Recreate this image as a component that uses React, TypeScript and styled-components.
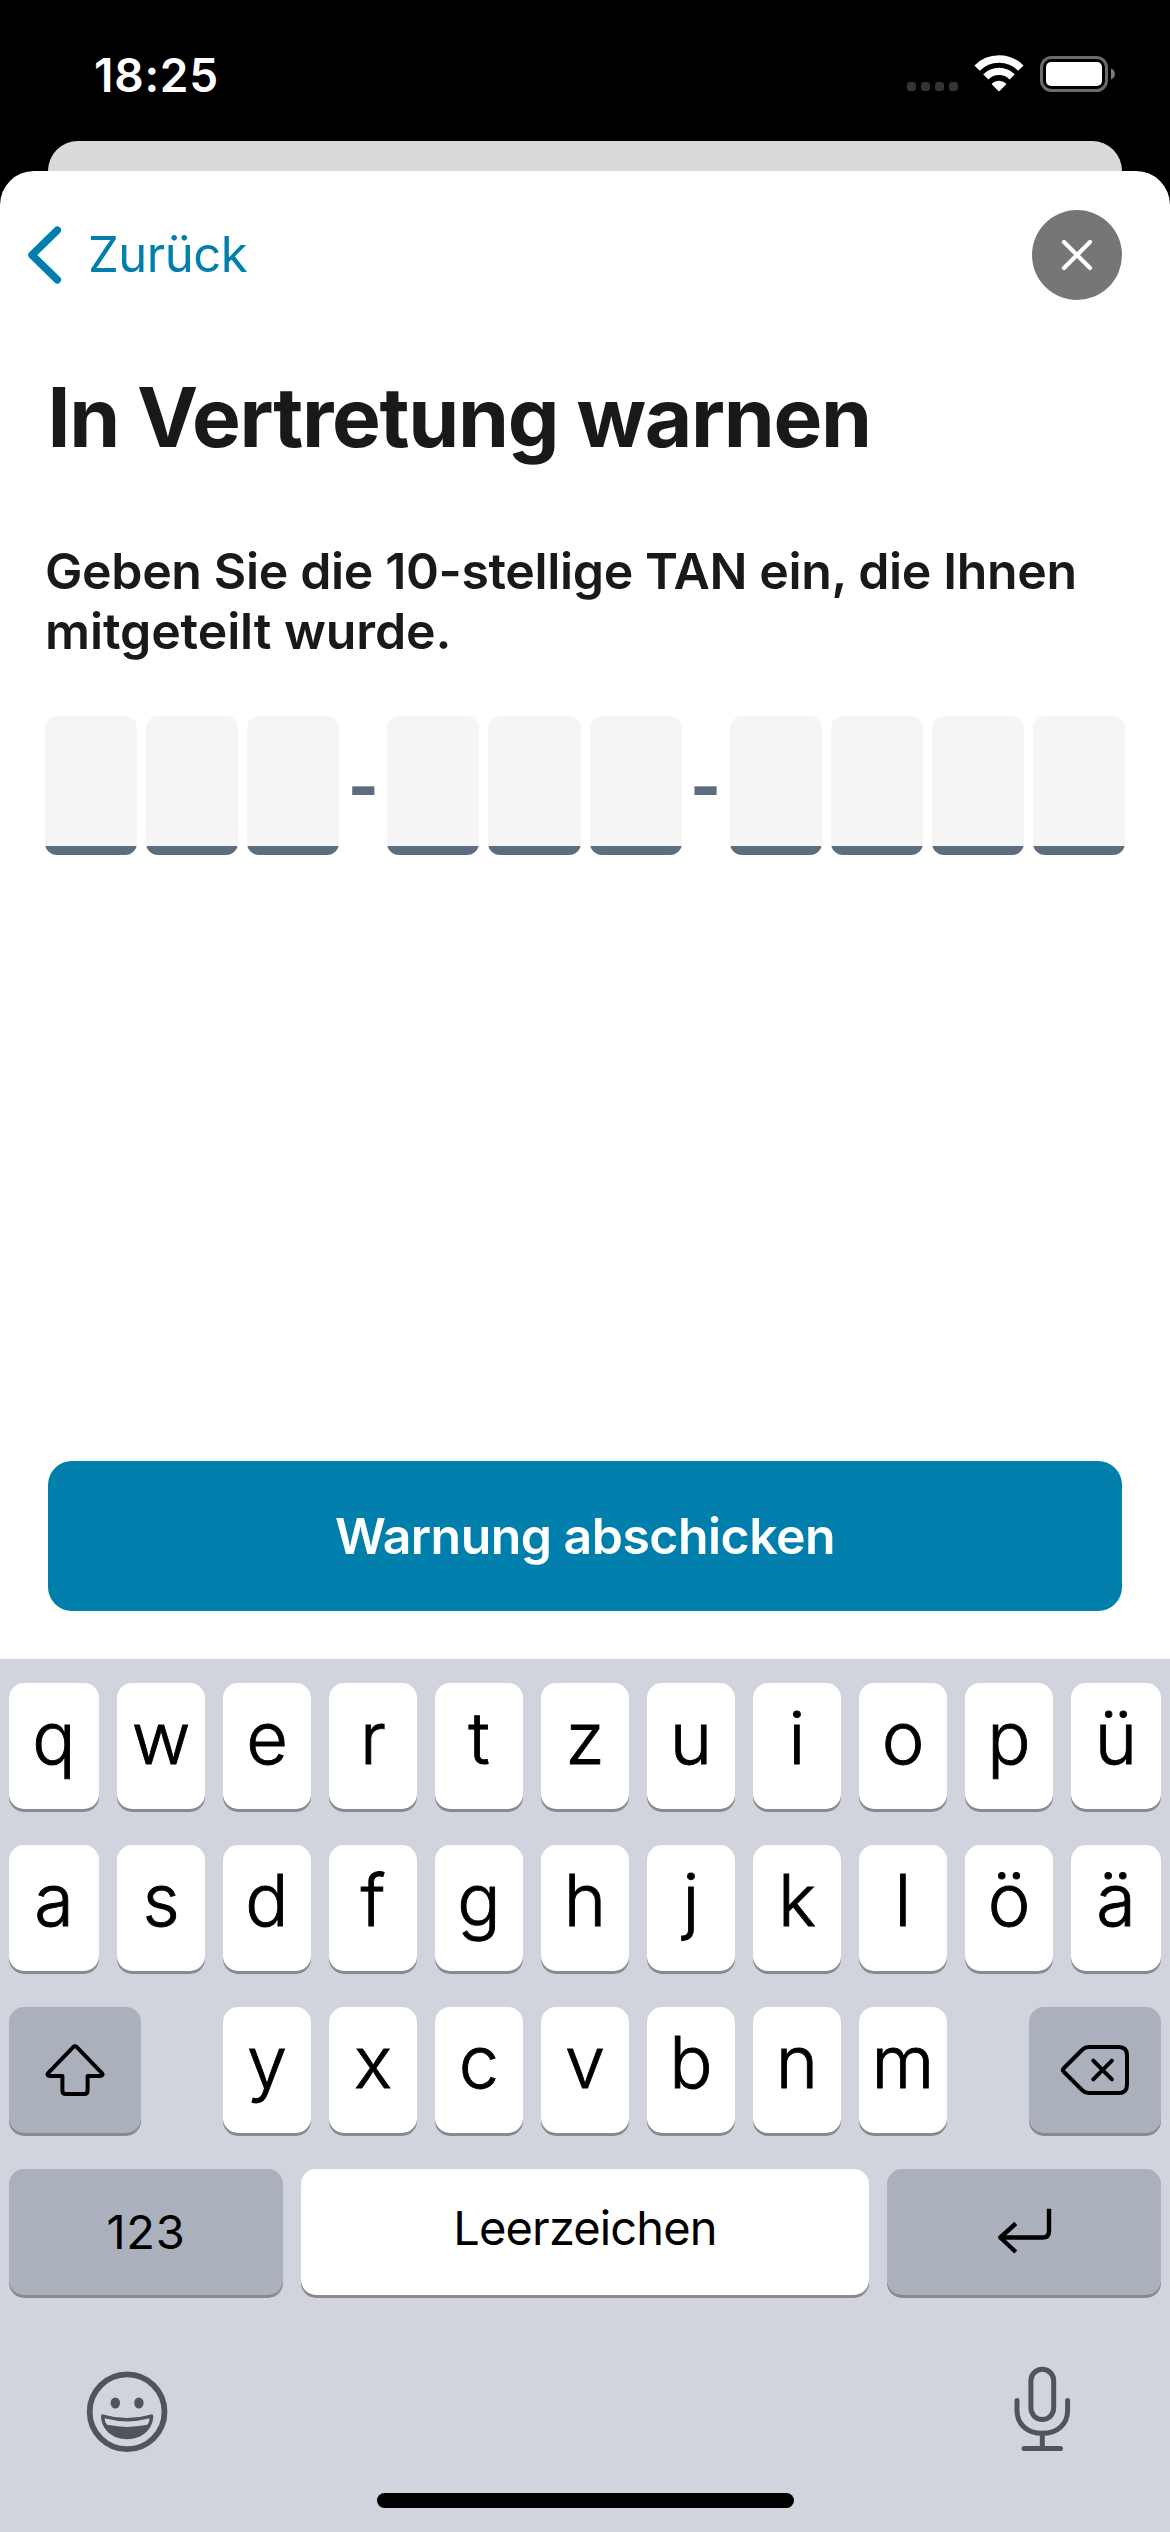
import React from "react";
import styled, { createGlobalStyle } from "styled-components";

const accent = "#007fad";
const slate = "#5c6d80";
const glyphGrey = "#50545c";

const GlobalStyle = createGlobalStyle`
  *, *::before, *::after { box-sizing: border-box; }
  body { margin: 0; background: #000; }
  button { border: 0; padding: 0; margin: 0; background: none; font: inherit; color: inherit; }
  svg { display: block; flex: none; }
`;

const Screen = styled.div`
  width: 1170px;
  height: 2532px;
  display: flex;
  flex-direction: column;
  overflow: hidden;
  background: #000;
  font-family: Inter, "Liberation Sans", sans-serif;
`;

const StatusBar = styled.header`
  flex: none;
  height: 141px;
  padding: 8px 54px 0 94px;
  display: flex;
  align-items: center;
  justify-content: space-between;
  color: #fff;
`;

const Clock = styled.span`
  font-size: 46px;
  font-weight: 600;
  line-height: 60px;
  letter-spacing: 0.75px;
`;

const Indicators = styled.div`
  display: flex;
  align-items: flex-start;
  gap: 16px;
  height: 39px;
`;

const SignalDots = styled.div`
  display: flex;
  gap: 5px;
  padding-top: 27px;
`;

const SignalDot = styled.i`
  width: 9px;
  height: 9px;
  border-radius: 3px;
  background: #333433;
`;

const UnderlyingSheet = styled.div`
  flex: none;
  height: 30px;
  margin: 0 48px;
  border-radius: 30px 30px 0 0;
  background: #dadada;
`;

const Sheet = styled.main`
  flex: none;
  height: 1488px;
  padding-bottom: 48px;
  display: flex;
  flex-direction: column;
  border-radius: 34px 34px 0 0;
  background: #fff;
  color: #18191b;
`;

const NavBar = styled.nav`
  height: 168px;
  padding: 0 48px 0 24px;
  display: flex;
  align-items: center;
  justify-content: space-between;
`;

const BackButton = styled.button`
  display: flex;
  align-items: center;
  gap: 23px;
  color: ${accent};
  font-size: 49px;
  line-height: 60px;
  letter-spacing: -0.5px;
`;

const CloseButton = styled.button`
  width: 90px;
  height: 90px;
  display: flex;
  align-items: center;
  justify-content: center;
  border-radius: 50%;
  background: #757678;
`;

const Title = styled.h1`
  margin: 28px 0 0 47.5px;
  font-size: 82px;
  font-weight: 700;
  line-height: 101px;
  letter-spacing: -1.3px;
`;

const Instruction = styled.p`
  margin: 73px 45px 0;
  font-size: 50px;
  font-weight: 600;
  line-height: 60px;
`;

const InstructionLine = styled.span<{ $tracking: string }>`
  display: block;
  white-space: nowrap;
  letter-spacing: ${(p) => p.$tracking};
`;

const TanInput = styled.div`
  height: 139px;
  margin: 55px 45px 0;
  display: flex;
`;

const TanGroup = styled.div<{ $count: number }>`
  flex: none;
  display: grid;
  grid-template-columns: repeat(${(p) => p.$count}, 92.1px);
  gap: 9px;
`;

const TanDigit = styled.div`
  border-radius: 12px;
  background: linear-gradient(to bottom, #f5f5f5 130px, ${slate} 130px);
`;

const TanSeparator = styled.span`
  flex: 1;
  padding-top: 30px;
  text-align: center;
  color: ${slate};
  font-size: 66px;
  font-weight: 800;
  line-height: 80px;
`;

const SubmitButton = styled.button`
  height: 150px;
  margin: auto 48px 0;
  border-radius: 24px;
  background: ${accent};
  color: #fff;
  font-size: 50px;
  font-weight: 600;
  line-height: 60px;
  letter-spacing: -0.54px;
`;

const Keyboard = styled.section`
  flex: 1;
  padding: 24px 9px;
  display: flex;
  flex-direction: column;
  background: #d1d4dc;
  color: #000;
`;

const KeyRows = styled.div`
  display: flex;
  flex-direction: column;
  gap: 36px;
`;

const KeyRow = styled.div<{ $columns: string }>`
  display: grid;
  grid-template-columns: ${(p) => p.$columns};
  justify-content: space-between;
  column-gap: 18px;
`;

const KeyCluster = styled.div`
  display: grid;
  grid-template-columns: repeat(7, 88px);
  column-gap: 18px;
`;

const Key = styled.button<{ $muted?: boolean }>`
  height: 126px;
  display: flex;
  align-items: center;
  justify-content: center;
  border-radius: 15px;
  background: ${(p) => (p.$muted ? "#aab0bc" : "#fff")};
  box-shadow: 0 3px 0 #898a8d;
`;

const LetterKey = styled(Key)`
  padding-bottom: 16px;
  font-size: 72px;
  font-weight: 300;
  line-height: 90px;
  -webkit-text-stroke: 0.9px #000;
`;

const LabelKey = styled(Key)<{ $tracking: string; $lift?: string }>`
  padding-bottom: ${(p) => p.$lift ?? "0"};
  font-size: 47px;
  line-height: 60px;
  letter-spacing: ${(p) => p.$tracking};
`;

const KeyboardFooter = styled.div`
  height: 198px;
  padding: 70px 89.5px 0 76px;
  display: flex;
  align-items: flex-start;
  justify-content: space-between;
`;

const EmojiButton = styled.button`
  padding-top: 5px;
`;

const HomeIndicator = styled.div`
  width: 417px;
  height: 15px;
  margin: 0 auto;
  border-radius: 8px;
  background: #000;
`;

const WifiIcon = () => (
  <svg width="50" height="37" viewBox="974 55 50 37" fill="none" stroke="#fff">
    <path d="M977.1 68.1a31 31 0 0 1 43.8 0" strokeWidth="7.6" />
    <path d="M985.8 76.8a18.7 18.7 0 0 1 26.4 0" strokeWidth="7.4" />
    <path d="M992 83.6a10.2 10.2 0 0 1 14 0q.5.5 0 1l-6.4 6.3q-.6.6-1.2 0L992 84.6q-.5-.5 0-1z" fill="#fff" stroke="none" />
  </svg>
);

const BatteryIcon = () => (
  <svg width="76" height="38" viewBox="1040 55 76 38">
    <rect x="1041.5" y="57.5" width="65" height="33" rx="10" fill="none" stroke="#6b6b6b" strokeWidth="3" />
    <rect x="1046" y="62" width="56" height="24" rx="5" fill="#fff" />
    <path d="M1111 68.5c5.2 2 5.2 9 0 11z" fill="#7a7a7a" />
  </svg>
);

const ChevronIcon = () => (
  <svg width="41" height="62" viewBox="24 224 41 62" fill="none" stroke={accent} strokeWidth="7.5" strokeLinecap="round" strokeLinejoin="round">
    <path d="M57.3 230.2 32 255l25.3 24.8" />
  </svg>
);

const CloseIcon = () => (
  <svg width="34" height="34" viewBox="0 0 34 34" stroke="#fff" strokeWidth="4.2" strokeLinecap="round">
    <path d="M4 4l26 26M30 4 4 30" />
  </svg>
);

const ShiftIcon = () => (
  <svg width="64" height="56" viewBox="43.5 2042 64 56" fill="none" stroke="#000" strokeWidth="4" strokeLinejoin="round">
    <path d="M73.9 2046.9q1.6-1.6 3.2 0l25.3 26.2q1 1 .5 1.9-.4.9-1.7.9H88.1v14.6q0 3.5-3.5 3.500H66.400q-3.500 0-3.500-3.500v-14.600H49.800q-1.300 0-1.700-.9-.5-.9.5-1.900z" />
  </svg>
);

const DeleteIcon = () => (
  <svg width="70" height="52" viewBox="1059 2044 70 52" fill="none" stroke="#000" strokeWidth="4" strokeLinecap="round" strokeLinejoin="round">
    <path d="M1062.5 2068.5 1081.5 2049.5q2.6-2.5 6.2-2.5h30q8.3 0 8.3 8.3v29.4q0 8.3-8.3 8.3h-30q-3.6 0-6.2-2.5L1062.5 2071.5q-1.4-1.5 0-3z" />
    <path d="M1092.300 2060.700l18.600 18.600M1110.900 2060.700l-18.600 18.600" />
  </svg>
);

const ReturnIcon = () => (
  <svg width="56" height="48" viewBox="995.5 2207.5 56 48" fill="none" stroke="#000" strokeWidth="4.4">
    <path d="M1048.5 2208.2v22.3q0 6.5-6.5 6.500H999" />
    <path d="M1015.300 2223 999.800 2237l15.500 14.500" strokeLinejoin="round" />
  </svg>
);

const EmojiIcon = () => (
  <svg width="84" height="84" viewBox="85 2370 84 84">
    <circle cx="127.1" cy="2411.8" r="37.4" fill="none" stroke={glyphGrey} strokeWidth="5.8" />
    <ellipse cx="115.3" cy="2403" rx="4.7" ry="5.5" fill={glyphGrey} />
    <ellipse cx="138.9" cy="2403" rx="4.7" ry="5.5" fill={glyphGrey} />
    <path
      fill={glyphGrey}
      fillRule="evenodd"
      d="M103.2 2414.4Q127 2421.6 150.9 2414.4 153.3 2414 153.3 2416.5C152.7 2430 141.5 2439.2 127.1 2439.2S101.6 2430 101 2416.5Q101 2414 103.2 2414.4ZM105.6 2418.6Q104.5 2418.3 104.7 2419.4 105.2 2422.3 106.6 2424.2 107.2 2424.9 108.3 2425.1 127 2428.7 146 2425.1 147.3 2424.9 147.9 2424 149.1 2422 149.5 2419.4 149.6 2418.3 148.6 2418.6 127 2424.2 105.6 2418.6Z"
    />
  </svg>
);

const MicIcon = () => (
  <svg width="60" height="88" viewBox="1011.5 2365 60 88" fill="none" stroke={glyphGrey} strokeWidth="5" strokeLinecap="round">
    <rect x="1030.4" y="2369.3" width="22.8" height="50.2" rx="11.4" />
    <path d="M1016.5 2400.5v9.5c0 14.5 10.3 23.3 25.3 23.3s25.3-8.8 25.3-23.3v-9.5M1041.8 2433.3v15M1023.500 2448.500h36.500" />
  </svg>
);

const fullRow = "90px repeat(9, 88px) 90px";

const Letters = ({ keys }: { keys: string }) => (
  <>
    {[...keys].map((letter) => (
      <LetterKey key={letter}>{letter}</LetterKey>
    ))}
  </>
);

const Digits = ({ count }: { count: number }) => (
  <TanGroup $count={count}>
    {Array.from({ length: count }, (_, i) => (
      <TanDigit key={i} />
    ))}
  </TanGroup>
);

export default function App() {
  return (
    <Screen>
      <GlobalStyle />
      <StatusBar>
        <Clock>18:25</Clock>
        <Indicators>
          <SignalDots>
            <SignalDot />
            <SignalDot />
            <SignalDot />
            <SignalDot />
          </SignalDots>
          <WifiIcon />
          <BatteryIcon />
        </Indicators>
      </StatusBar>
      <UnderlyingSheet />
      <Sheet>
        <NavBar>
          <BackButton>
            <ChevronIcon />
            Zurück
          </BackButton>
          <CloseButton aria-label="Schließen">
            <CloseIcon />
          </CloseButton>
        </NavBar>
        <Title>In Vertretung warnen</Title>
        <Instruction>
          <InstructionLine $tracking="-0.36px">Geben Sie die 10-stellige TAN ein, die Ihnen</InstructionLine>
          <InstructionLine $tracking="-0.1px">mitgeteilt wurde.</InstructionLine>
        </Instruction>
        <TanInput>
          <Digits count={3} />
          <TanSeparator>-</TanSeparator>
          <Digits count={3} />
          <TanSeparator>-</TanSeparator>
          <Digits count={4} />
        </TanInput>
        <SubmitButton>Warnung abschicken</SubmitButton>
      </Sheet>
      <Keyboard>
        <KeyRows>
          <KeyRow $columns={fullRow}>
            <Letters keys="qwertzuiopü" />
          </KeyRow>
          <KeyRow $columns={fullRow}>
            <Letters keys="asdfghjklöä" />
          </KeyRow>
          <KeyRow $columns="132px auto 132px">
            <Key $muted aria-label="Umschalt">
              <ShiftIcon />
            </Key>
            <KeyCluster>
              <Letters keys="yxcvbnm" />
            </KeyCluster>
            <Key $muted aria-label="Löschen">
              <DeleteIcon />
            </Key>
          </KeyRow>
          <KeyRow $columns="274px 568px 274px">
            <LabelKey $muted $tracking="0.7px">123</LabelKey>
            <LabelKey $tracking="-0.87px" $lift="8px">Leerzeichen</LabelKey>
            <Key $muted aria-label="Return">
              <ReturnIcon />
            </Key>
          </KeyRow>
        </KeyRows>
        <KeyboardFooter>
          <EmojiButton aria-label="Emoji">
            <EmojiIcon />
          </EmojiButton>
          <MicIcon />
        </KeyboardFooter>
        <HomeIndicator />
      </Keyboard>
    </Screen>
  );
}
